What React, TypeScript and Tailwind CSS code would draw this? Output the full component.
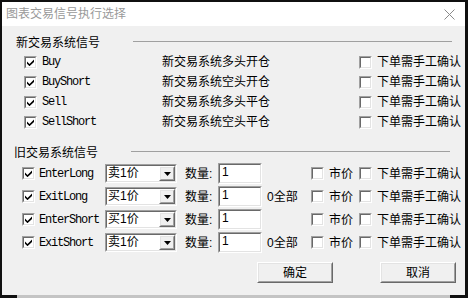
import React from "react";

const sunkenOuter = "border border-t-[#a0a0a0] border-l-[#a0a0a0] border-b-white border-r-white";
const sunkenInner = "border border-t-[#696969] border-l-[#696969] border-b-[#e3e3e3] border-r-[#e3e3e3]";
const raisedOuter = "border border-t-white border-l-white border-b-[#696969] border-r-[#696969]";
const raisedInner = "border border-t-[#e3e3e3] border-l-[#e3e3e3] border-b-[#a0a0a0] border-r-[#a0a0a0]";

function Check({ checked }: { checked?: boolean }) {
  return (
    <div className={`w-[13px] h-[13px] shrink-0 ${sunkenOuter}`}>
      <div className={`w-full h-full bg-white flex items-center justify-center ${sunkenInner}`}>
        {checked && (
          <svg width="7" height="7" viewBox="0 0 7 7">
            <path d="M0 2.5 L2.5 5 L7 0.5 L7 3 L2.5 7.2 L0 4.8 Z" fill="#000" />
          </svg>
        )}
      </div>
    </div>
  );
}

function Select({ v }: { v: string }) {
  return (
    <div className={`w-[72px] h-[19px] shrink-0 ${sunkenOuter}`}>
      <div className={`w-full h-full bg-white flex ${sunkenInner}`}>
        <div className="flex-1 pl-[1px] text-[12px] leading-[15px] text-black">{v}</div>
        <div className={`w-[16px] h-full bg-[#f0f0f0] ${raisedOuter}`}>
          <div className={`w-full h-full flex items-center justify-center ${raisedInner}`}>
            <svg width="7" height="4" viewBox="0 0 7 4">
              <path d="M0 0 H7 L3.5 4 Z" fill="#000" />
            </svg>
          </div>
        </div>
      </div>
    </div>
  );
}

function Input({ v }: { v: string }) {
  return (
    <div className={`w-[44px] h-[21px] shrink-0 ${sunkenOuter}`}>
      <div className={`w-full h-full bg-white pl-[2px] text-[12px] leading-[14px] ${sunkenInner}`}>{v}</div>
    </div>
  );
}

function Btn({ t }: { t: string }) {
  return (
    <div className={`w-[76px] h-[21px] bg-[#f0f0f0] ${raisedOuter}`}>
      <div className={`w-full h-full flex items-center justify-center text-[12px] ${raisedInner}`}>{t}</div>
    </div>
  );
}

const mono = "font-['Liberation_Mono',monospace] text-[12px] tracking-[-1.2px]";

function NewRow({ name, desc }: { name: string; desc: string }) {
  return (
    <div className="h-[20px] flex items-center pl-[22px]">
      <Check checked />
      <div className={`w-[125px] pl-[5px] ${mono}`}>{name}</div>
      <div className="w-[197px]">{desc}</div>
      <Check />
      <div className="pl-[5px]">下单需手工确认</div>
    </div>
  );
}

function OldRow({ name, sel, all }: { name: string; sel: string; all?: boolean }) {
  return (
    <div className="h-[23px] flex items-center pl-[20px]">
      <Check checked />
      <div className={`w-[70px] pl-[4px] ${mono}`}>{name}</div>
      <Select v={sel} />
      <div className="w-[41px] pl-[8px]">数量:</div>
      <Input v="1" />
      <div className="w-[49px] pl-[5px]">{all ? "0全部" : ""}</div>
      <Check />
      <div className="w-[35px] pl-[5px]">市价</div>
      <Check />
      <div className="pl-[5px]">下单需手工确认</div>
    </div>
  );
}

function GroupHead({ label, pl }: { label: string; pl: string }) {
  return (
    <div className={`h-[18px] flex items-center ${pl}`}>
      <div className="w-[117px]">{label}</div>
      <div className="w-[319px] h-px bg-[#a0a0a0] -mt-[3px]" />
    </div>
  );
}

export default function App() {
  return (
    <div className="w-[468px] h-[298px] bg-[#101010] overflow-hidden font-['Liberation_Sans','Noto_Sans_CJK_SC',sans-serif] text-[12px] text-black flex flex-col">
      <div className="flex">
        <div className="w-[2px]" />
        <div className="mt-[2px] w-[463px] h-[293px] bg-[#f0f0f0] flex flex-col">
          <div className="h-[24px] bg-white flex items-center justify-between pl-[4px] pr-[10px]">
            <span className="text-[#999999] text-[12px]">图表交易信号执行选择</span>
            <svg width="11" height="11" viewBox="0 0 11 11">
              <path d="M0.5 0.5 L10.5 10.5 M10.5 0.5 L0.5 10.5" stroke="#8a8a8a" strokeWidth="1" />
            </svg>
          </div>
          <div className="pt-[8px] flex flex-col">
            <GroupHead label="新交易系统信号" pl="pl-[14px]" />
            <NewRow name="Buy" desc="新交易系统多头开仓" />
            <NewRow name="BuyShort" desc="新交易系统空头开仓" />
            <NewRow name="Sell" desc="新交易系统多头平仓" />
            <NewRow name="SellShort" desc="新交易系统空头平仓" />
            <div className="h-[12px]" />
            <GroupHead label="旧交易系统信号" pl="pl-[12px]" />
            <OldRow name="EnterLong" sel="卖1价" />
            <OldRow name="ExitLong" sel="买1价" all />
            <OldRow name="EnterShort" sel="买1价" />
            <OldRow name="ExitShort" sel="卖1价" all />
            <div className="flex pl-[255px] pt-[8px] gap-[47px]">
              <Btn t="确定" />
              <Btn t="取消" />
            </div>
          </div>
        </div>
      </div>
      <div className="flex h-[3px]">
        <div className="w-[17px]" />
        <div className="w-[433px] bg-[#c4c4c4]" />
      </div>
    </div>
  );
}
